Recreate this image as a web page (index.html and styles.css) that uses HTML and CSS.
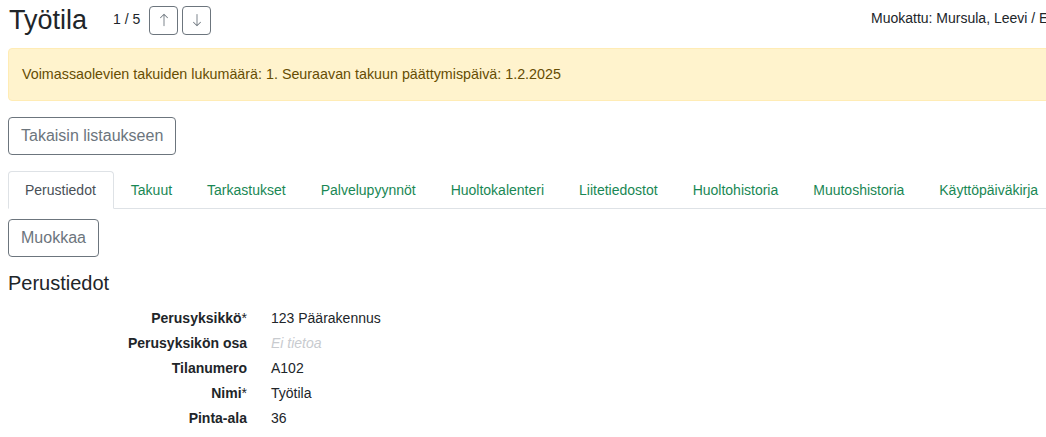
FILE: index.html
```html
<!DOCTYPE html>
<html lang="fi">
<head>
    <meta charset="UTF-8">
    <meta name="viewport" content="width=device-width, initial-scale=1.0">
    <title>Työtila</title>
    <link rel="stylesheet" href="styles.css">
</head>
<body>
<div class="page">
    <div class="header">
        <div class="title-group">
            <h1 class="title">Työtila</h1>
            <span class="counter">1 / 5</span>
            <button class="nav-btn" type="button" title="Edellinen">
                <svg width="14" height="14" viewBox="0 0 16 16" fill="currentColor"><path fill-rule="evenodd" d="M8 15a.5.5 0 0 0 .5-.5V2.707l3.146 3.147a.5.5 0 0 0 .708-.708l-4-4a.5.5 0 0 0-.708 0l-4 4a.5.5 0 1 0 .708.708L7.5 2.707V14.5a.5.5 0 0 0 .5.5z"/></svg>
            </button>
            <button class="nav-btn" type="button" title="Seuraava">
                <svg width="14" height="14" viewBox="0 0 16 16" fill="currentColor"><path fill-rule="evenodd" d="M8 1a.5.5 0 0 1 .5.5v11.793l3.146-3.147a.5.5 0 0 1 .708.708l-4 4a.5.5 0 0 1-.708 0l-4-4a.5.5 0 0 1 .708-.708L7.5 13.293V1.5A.5.5 0 0 1 8 1z"/></svg>
            </button>
        </div>
        <div class="modified">Muokattu: Mursula, Leevi / Eilen klo 14.32</div>
    </div>

    <div class="alert">Voimassaolevien takuiden lukumäärä: 1. Seuraavan takuun päättymispäivä: 1.2.2025</div>

    <button class="btn" type="button">Takaisin listaukseen</button>

    <ul class="tabs">
        <li><a class="tab active" href="#">Perustiedot</a></li>
        <li><a class="tab" href="#">Takuut</a></li>
        <li><a class="tab" href="#">Tarkastukset</a></li>
        <li><a class="tab" href="#">Palvelupyynnöt</a></li>
        <li><a class="tab" href="#">Huoltokalenteri</a></li>
        <li><a class="tab" href="#">Liitetiedostot</a></li>
        <li><a class="tab" href="#">Huoltohistoria</a></li>
        <li><a class="tab" href="#">Muutoshistoria</a></li>
        <li><a class="tab" href="#">Käyttöpäiväkirja</a></li>
        <li><a class="tab" href="#">Laitteet</a></li>
    </ul>

    <button class="btn edit-btn" type="button">Muokkaa</button>

    <h2 class="section-title">Perustiedot</h2>

    <dl class="details">
        <dt>Perusyksikkö<span class="req">*</span></dt>
        <dd>123 Päärakennus</dd>
        <dt>Perusyksikön osa</dt>
        <dd class="empty">Ei tietoa</dd>
        <dt>Tilanumero</dt>
        <dd>A102</dd>
        <dt>Nimi<span class="req">*</span></dt>
        <dd>Työtila</dd>
        <dt>Pinta-ala</dt>
        <dd>36</dd>
    </dl>
</div>
</body>
</html>
```

FILE: styles.css
```css
body {
    margin: 0;
    font-family: "Liberation Sans", Arial, sans-serif;
    font-size: 14px;
    line-height: 1.5;
    color: #212529;
    overflow: hidden;
}

.page {
    width: 1300px;
    padding: 0 8px;
}

.header {
    display: grid;
    grid-template-columns: 863px auto;
    height: 48px;
}

.title-group {
    display: flex;
    align-items: center;
    height: 41px;
}

.title {
    margin: 0 26px 0 1px;
    font-size: 27px;
    font-weight: normal;
    line-height: 1.2;
}

.counter {
    margin-right: 9px;
    margin-top: -2px;
}

.nav-btn {
    display: flex;
    align-items: center;
    justify-content: center;
    width: 29px;
    height: 29px;
    margin-right: 4px;
    margin-top: -1px;
    padding: 0;
    border: 1px solid #6c757d;
    border-radius: 4px;
    background: #fff;
    color: #6c757d;
}

.modified {
    padding-top: 8px;
    white-space: nowrap;
}

.alert {
    padding: 15px 13px;
    margin-bottom: 16px;
    border: 1px solid #ffecb5;
    border-radius: 4px;
    background-color: #fff3cd;
    color: #664d03;
    font-size: 14.3px;
    line-height: 21px;
}

.btn {
    display: block;
    padding: 6px 12px;
    border: 1px solid #6c757d;
    border-radius: 4px;
    background: #fff;
    color: #6c757d;
    font-family: inherit;
    font-size: 16px;
    line-height: 24px;
}

.tabs {
    display: flex;
    margin: 16px 0 0;
    padding: 0;
    list-style: none;
    border-bottom: 1px solid #dee2e6;
    white-space: nowrap;
}

.tab {
    display: block;
    margin-bottom: -1px;
    padding: 8px 17px 7px 16px;
    border: 1px solid transparent;
    border-radius: 4px 4px 0 0;
    color: #198754;
    text-decoration: none;
}

.tab.active {
    border-color: #dee2e6 #dee2e6 #fff;
    color: #495057;
}

.edit-btn {
    margin-top: 10px;
}

.section-title {
    margin: 14px 0 11px;
    font-size: 20px;
    font-weight: normal;
    line-height: 1.2;
}

.details {
    display: grid;
    grid-template-columns: 239px 1fr;
    column-gap: 24px;
    margin: 0;
}

.details dt {
    text-align: right;
    font-weight: bold;
    line-height: 25px;
}

.details .req {
    font-weight: normal;
}

.details dd {
    margin: 0;
    line-height: 25px;
}

.details .empty {
    color: #c8cbcf;
    font-style: italic;
}
```
